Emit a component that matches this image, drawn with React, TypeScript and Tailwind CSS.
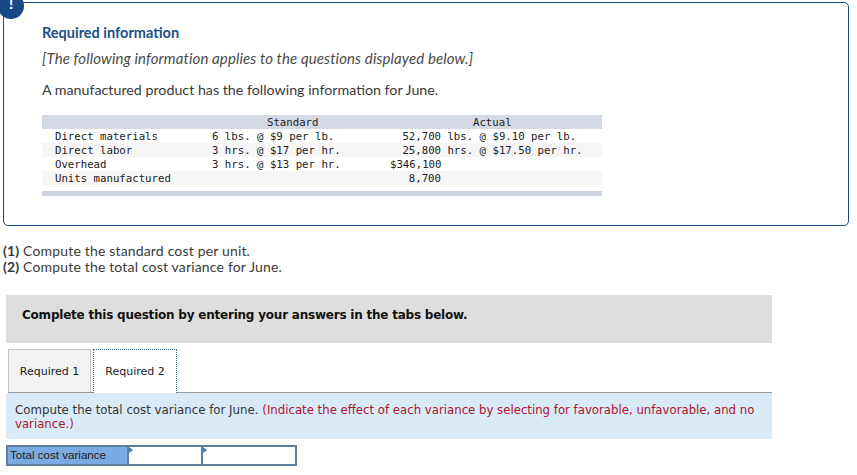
import React from "react"

const rows = [
  { label: "Direct materials", std: "6 lbs. @ $9 per lb.", num: "52,700", rest: " lbs. @ $9.10 per lb.", shade: false },
  { label: "Direct labor", std: "3 hrs. @ $17 per hr.", num: "25,800", rest: " hrs. @ $17.50 per hr.", shade: true },
  { label: "Overhead", std: "3 hrs. @ $13 per hr.", num: "$346,100", rest: "", shade: false },
  { label: "Units manufactured", std: "", num: "8,700", rest: "", shade: true },
]

function AnswerCell({ className }: { className: string }) {
  return (
    <div className={`relative h-full border-2 border-[#5f7f9f] bg-white ${className}`}>
      {/* little corner marker */}
      <span className="absolute left-0 top-0 h-0 w-0 border-y-[3px] border-l-[4px] border-y-transparent border-l-[#3f7fc4]" />
    </div>
  )
}

export default function App() {
  return (
    <div className="relative h-[475px] w-[857px] overflow-hidden bg-white font-['Lato','Open_Sans',sans-serif] text-[#3a3a3a]">
      {/* alert badge */}
      <div className="absolute left-[-2px] top-[-7px] flex h-[26px] w-[26px] items-end justify-center rounded-full bg-[#174a84] pb-[8px] text-[15px] font-bold leading-none text-white">
        !
      </div>

      <div className="ml-[3px] mt-[2px] h-[224px] w-[846px] rounded-[5px] border border-[#174a84] pl-[38px] pt-[21px]">
        <h2 className="text-[14.5px] font-bold leading-[18px] text-[#1b4f8a]">Required information</h2>
        <p className="mt-[7px] text-[15px] italic leading-[18px] tracking-[0.11px] text-[#4a4a4a]">
          [The following information applies to the questions displayed below.]
        </p>
        <p className="mt-[14px] text-[14.25px] leading-[18px]">A manufactured product has the following information for June.</p>

        <div className="mt-[16px] w-[560px] font-['DejaVu_Sans_Mono',monospace] text-[10.7px] leading-[14px] text-[#222]">
          <div className="grid h-[14px] grid-cols-[157px_178px_51px_1fr] bg-[#d5d9e4] pl-[13px] pt-px">
            <span className="col-start-2 pl-[55px]">Standard</span>
            <span className="col-span-2 whitespace-pre pl-[83px]">Actual</span>
          </div>
          {rows.map((r) => (
            <div
              key={r.label}
              className={`grid h-[14px] grid-cols-[157px_178px_51px_1fr] whitespace-pre pl-[13px] pt-px ${r.shade ? "bg-[#f6f6f6]" : "bg-white"}`}
            >
              <span>{r.label}</span>
              <span>{r.std}</span>
              <span className="text-right">{r.num}</span>
              <span>{r.rest}</span>
            </div>
          ))}
          <div className="mt-[6px] h-[5px] bg-[#cdd3df]" />
        </div>
      </div>

      <div className="ml-[3px] mt-[17px] text-[14px] leading-[16px] tracking-[0.17px]">
        <p>
          <b>(1)</b> Compute the standard cost per unit.
        </p>
        <p>
          <b>(2)</b> Compute the total cost variance for June.
        </p>
      </div>

      <div className="ml-[6px] mt-[20px] h-[48px] w-[766px] bg-[#dedede] pl-[16px] pt-[11px] font-['DejaVu_Sans',sans-serif] text-[12px] font-bold leading-[18px] tracking-[-0.22px] text-[#111]">
        Complete this question by entering your answers in the tabs below.
      </div>

      {/* tabs */}
      <div className="ml-[8px] mt-[6px] flex h-[44px] w-[764px] items-end gap-[2px] border-b border-[#999] font-['DejaVu_Sans',sans-serif] text-[11px] text-[#222]">
        <div className="flex h-[43px] w-[83px] items-center justify-center border border-b-0 border-[#c4c4c4] bg-[#f2f2f2] pt-[2px]">Required 1</div>
        <div className="relative top-px flex h-[44px] w-[84px] items-center justify-center border border-b-0 border-dotted border-[#3c6ea5] bg-white pt-[1px]">Required 2</div>
      </div>

      <div className="ml-[6px] h-[46px] w-[766px] bg-[#d9ebf9] pl-[9px] pr-[8px] pt-[10px] font-['DejaVu_Sans',sans-serif] text-[11.8px] leading-[14px] text-[#333]">
        Compute the total cost variance for June. <span className="text-[11.72px] text-[#b0122b]">(Indicate the effect of each variance by selecting for favorable, unfavorable, and no variance.)</span>
      </div>

      <div className="ml-[6px] mt-[6px] flex h-[21px] w-[291px]">
        <div className="flex h-full w-[121px] items-center border-2 border-r-0 border-[#5f7f9f] bg-[#7aabe3] pb-[2px] pl-[2px] font-['Liberation_Sans',sans-serif] text-[11.6px] text-[#222]">
          Total cost variance
        </div>
        <AnswerCell className="w-[74px] border-r-0" />
        <AnswerCell className="w-[96px]" />
      </div>
    </div>
  )
}
